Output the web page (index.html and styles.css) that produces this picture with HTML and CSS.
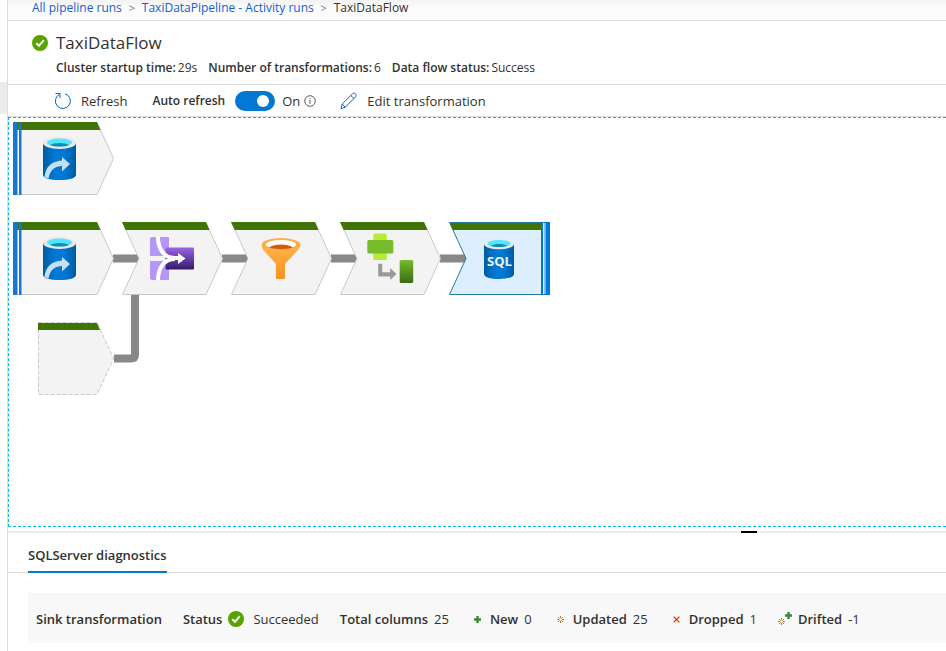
FILE: index.html
```html
<!DOCTYPE html>
<html lang="en">
<head>
<meta charset="utf-8">
<title>TaxiDataFlow</title>
<link rel="stylesheet" href="styles.css">
</head>
<body>
<svg class="defs" aria-hidden="true">
  <defs>
    <linearGradient id="blue"><stop offset="0" stop-color="#005ba1"/><stop offset=".35" stop-color="#0078d4"/><stop offset=".65" stop-color="#0078d4"/><stop offset="1" stop-color="#005ba1"/></linearGradient>
    <linearGradient id="purple" x2="0" y2="1"><stop offset="0" stop-color="#9a66e4"/><stop offset="1" stop-color="#341a6e"/></linearGradient>
    <linearGradient id="orange" x2="0" y2="1"><stop offset="0" stop-color="#ffb34d"/><stop offset="1" stop-color="#fa9218"/></linearGradient>
    <linearGradient id="green" x2="0" y2="1"><stop offset="0" stop-color="#76bc2d"/><stop offset="1" stop-color="#3b6a14"/></linearGradient>
    <symbol id="check" viewBox="0 0 16 16"><circle cx="8" cy="8" r="8" fill="#57a300"/><path d="M4.3 8.2 7 10.8 11.8 5.2" fill="none" stroke="#fff" stroke-width="2"/></symbol>
    <symbol id="plus" viewBox="0 0 7 7"><path d="M2.300 0h2.400v2.300H7v2.400H4.700V7H2.300V4.700H0V2.300h2.300z" fill="#388a34"/></symbol>
    <symbol id="star" viewBox="0 0 7 7"><path d="M3.500 0v2.200M3.500 4.800V7M0 3.500h2.200M4.800 3.500H7M1 1l1.600 1.600M4.400 4.400 6 6M6 1 4.400 2.600M2.600 4.400 1 6" stroke="#c27d1a" fill="none"/></symbol>
    <symbol id="source" viewBox="0 0 101 73">
      <path d="M.5.5h83.500l16.500 36-16.500 36H.5z" fill="#f3f3f3" stroke="#c8c8c8"/>
      <path d="M0 0h84l3.500 8H0z" fill="#407505"/>
      <path d="M5 8h1v64H5z" fill="#fff"/>
      <path d="M0 0h4.500v73H0zM6 0h2.500v73H6z" fill="#1579d2"/>
      <path d="M30 21v32c0 3 7 5 16.500 5S63 56 63 53V21z" fill="url(#blue)"/>
      <ellipse cx="46.500" cy="21" rx="16.500" ry="6" fill="#e8e8e8"/>
      <ellipse cx="46.500" cy="20.500" rx="12.500" ry="4" fill="#50e6ff"/>
      <path d="M37 23c4-2.700 15-2.700 19 0-4 2-15 2-19 0z" fill="#198ab3"/>
      <path d="M31.500 55c1-10 7-16 17.500-16.500V35l8 7-8 7.500V44c-7 0-12 4-13.500 12.700z" fill="#c3e0f7"/>
    </symbol>
    <symbol id="step" viewBox="0 0 101 73">
      <path d="M.5.5H84l16.500 36-16.500 36H.5l16.500-36z" fill="#f3f3f3" stroke="#c8c8c8"/>
      <path d="M0 0h84l3.500 8H3.700z" fill="#407505"/>
    </symbol>
  </defs>
</svg>
<div class="app">
  <div class="rail"><div class="rail-item"></div></div>
  <main class="main">
    <nav class="crumbs" aria-label="Breadcrumb">
      <a href="#">All pipeline runs</a><span class="sep">&gt;</span><a href="#">TaxiDataPipeline - Activity runs</a><span class="sep">&gt;</span><span>TaxiDataFlow</span>
    </nav>
    <header class="head">
      <svg class="status" viewBox="0 0 16 16"><use href="#check"/></svg>
      <div>
        <h1>TaxiDataFlow</h1>
        <div class="facts">
          <span><b>Cluster startup time:</b>29s</span>
          <span><b>Number of transformations:</b>6</span>
          <span><b>Data flow status:</b>Success</span>
        </div>
      </div>
    </header>
    <div class="toolbar">
      <button class="tool" type="button">
        <svg class="tool-icon" viewBox="0 0 18 18" fill="none" stroke="#0067c5"><path d="M11 1.800a7.500 7.500 0 1 1-5.500.5M1.500 1.500h4.500V6"/></svg>Refresh
      </button>
      <label class="auto" for="auto">Auto refresh</label>
      <input class="switch" id="auto" type="checkbox" role="switch" checked>
      <span class="on">On</span>
      <svg class="info" viewBox="0 0 12 12" fill="none" stroke="#605e5c"><circle cx="6" cy="6" r="5.300"/><path d="M6 5v4M6 3v1"/></svg>
      <button class="tool edit" type="button">
        <svg class="tool-icon" viewBox="0 0 18 18" fill="none" stroke="#0f62c0"><path d="M1 16.500 2.200 12 12.500 1.800c1-1 2.300-.8 3 0s.8 2 0 3L5.200 15.300zM10.800 3.500l3.200 3.200M2.200 12l3 3.200"/></svg>Edit transformation
      </button>
    </div>
    <section class="canvas" aria-label="Data flow">
      <svg class="links" viewBox="0 0 560 290" fill="none" stroke="#8a8886" stroke-width="8"><path d="M104 140.500h26M213 140.500h26M322 140.500h26M431 140.500h26"/><path d="M105 240.500h17q4 0 4-4V177"/></svg>
      <svg class="node col-1 row-1" viewBox="0 0 101 73"><use href="#source"/></svg>
      <svg class="node col-1 row-2" viewBox="0 0 101 73"><use href="#source"/></svg>
      <svg class="node col-2 row-2" viewBox="0 0 101 73">
        <use href="#step"/>
        <path d="M29.500 15H47v19H28V16.500zM28 39h19v19H29.500L28 56.500z" fill="#b796f9"/>
        <rect x="43.500" y="25.500" width="28.500" height="22" rx="1" fill="url(#purple)"/>
        <path d="M36 15c0 12 6 21 17 21h5M36 58c0-12 6-21 17-21" fill="none" stroke="#fff" stroke-width="4"/>
        <path d="M56 31l7.500 5.500L56 42z" fill="#fff"/>
      </svg>
      <svg class="node col-3 row-2" viewBox="0 0 101 73">
        <use href="#step"/>
        <path d="M30.700 23c0 3 1.300 4.800 3 6.500L45 42v13.500q0 1.500 1.500 1.500h6q1.500 0 1.500-1.500V42l11.500-12.500c2-2 3.500-4 3.500-6.500z" fill="url(#orange)"/>
        <ellipse cx="50" cy="22.500" rx="19.300" ry="6.500" fill="#ffae45"/>
        <ellipse cx="50" cy="22.500" rx="15" ry="4.500" fill="#fff"/>
        <path d="M38 25.500c5-4 19-4 24 0-5 2.200-19 2.200-24 0z" fill="#d45b08"/>
      </svg>
      <svg class="node col-4 row-2" viewBox="0 0 101 73">
        <use href="#step"/>
        <rect x="33.300" y="11.500" width="13.500" height="26.500" rx="1.500" fill="#b4ec36"/>
        <rect x="27.300" y="18" width="26" height="13.500" rx="1.500" fill="#76bc2d"/>
        <path d="M38.200 41.700h4v8.500h8V46l6.300 6-6.300 6v-3.600h-12z" fill="#999"/>
        <rect x="59.700" y="38" width="13.500" height="23" rx="1.500" fill="url(#green)"/>
      </svg>
      <svg class="node col-5 row-2" viewBox="0 0 101 73">
        <path d="M.5.500h100v72H.5l16.500-36z" fill="#ddeffe" stroke="#237b9f"/>
        <path d="M1 1h92v7H4z" fill="#407505"/>
        <path d="M92 0h2v73h-2zM96.500 0h4.500v73h-4.500z" fill="#0078d4"/>
        <path d="M95 1h1v71h-1z" fill="#0078d4" opacity=".4"/>
        <path d="M35 22v30c0 3 6 5 15 5s15-2 15-5V22z" fill="url(#blue)"/>
        <ellipse cx="50" cy="22" rx="15" ry="5.300" fill="#e8e8e8"/>
        <ellipse cx="50" cy="21.500" rx="11.500" ry="3.600" fill="#50e6ff"/>
        <path d="M41.500 23.700c4-2.400 13-2.400 17 0-4 1.800-13 1.800-17 0z" fill="#198ab3"/>
        <text class="sql" x="50.500" y="44" text-anchor="middle">SQL</text>
      </svg>
      <svg class="node ref row-3" viewBox="0 0 76 73">
        <path d="M.5.500H59l16.500 36-16.500 36H.5z" fill="#f3f3f3" stroke="#c8c8c8" stroke-dasharray="4 2"/>
        <path d="M0 1h59l3 7H0z" fill="#407505"/>
      </svg>
    </section>
    <div class="splitter"><span class="grip"></span></div>
    <div class="tabs" role="tablist"><button class="tab" type="button" role="tab" aria-selected="true">SQLServer diagnostics</button></div>
    <section class="summary">
      <b>Sink transformation</b>
      <span class="pair state"><b>Status</b><svg class="status" viewBox="0 0 16 16"><use href="#check"/></svg>Succeeded</span>
      <span class="pair"><b>Total columns</b>25</span>
      <span class="pair mark"><svg class="glyph" viewBox="0 0 7 7"><use href="#plus"/></svg><b>New</b>0</span>
      <span class="pair mark"><svg class="glyph" viewBox="0 0 7 7"><use href="#star"/></svg><b>Updated</b>25</span>
      <span class="pair mark"><svg class="glyph" viewBox="0 0 7 7" fill="none" stroke="#d83b01" stroke-width="1.300"><path d="M.6.600l5.800 5.800M6.400.600.600 6.400"/></svg><b>Dropped</b>1</span>
      <span class="pair drift"><svg class="double" viewBox="0 0 14 14"><use href="#plus" x="7" width="7" height="7"/><use href="#star" y="6" width="7" height="7"/></svg><b>Drifted</b>-1</span>
    </section>
  </main>
</div>
</body>
</html>
```
FILE: styles.css
```css
* { box-sizing: border-box; }
body { margin: 0; background: #fff; color: #323130; font: 13px/18px "Segoe UI", "Open Sans", "Noto Sans", sans-serif; }
b { font-weight: 600; }
svg { display: block; flex: none; }
button { font: inherit; color: inherit; background: none; border: 0; padding: 0; }
.defs { position: absolute; width: 0; height: 0; }
.app { display: flex; height: 100vh; overflow: hidden; white-space: nowrap; }
.rail { flex: none; width: 8px; border-right: 1px solid #dcdcdc; padding-top: 82px; }
.rail-item { height: 32px; background: #edebe9; }
.main { flex: 1; min-width: 0; display: flex; flex-direction: column; }

.crumbs { display: flex; align-items: flex-start; height: 21px; padding: 0 24px; font-size: 12px; line-height: 16px; background: linear-gradient(#f3f3f3, #fcfcfc 8px); border-bottom: 1px solid #dcdcdc; }
.crumbs a { color: #1160d0; text-decoration: none; }
.sep { width: 20px; text-align: center; color: #797775; font-size: 11px; }

.head { display: flex; gap: 8px; height: 64px; padding: 10px 24px 0; border-bottom: 1px solid #dcdcdc; }
.status { width: 16px; height: 16px; }
.head .status { margin-top: 4px; }
h1 { margin: 0; font-size: 17px; line-height: 24px; font-weight: 500; }
.facts { display: flex; gap: 11px; margin-top: 4px; font-size: 12px; }
.facts b { margin-right: 2px; }

.toolbar { display: flex; align-items: center; height: 32px; padding-left: 46px; border-bottom: 1px solid #dcdcdc; }
.tool { display: flex; align-items: center; gap: 9px; }
.tool-icon { width: 18px; height: 18px; }
.auto { margin-left: 25px; font-weight: 600; font-size: 12px; }
.switch { appearance: none; flex: none; width: 40px; height: 20px; margin: 0 7px 0 10px; border-radius: 10px; background: #0078d4; padding: 4px 6px; }
.switch::before { content: ""; display: block; width: 12px; height: 12px; border-radius: 50%; background: #fff; }
.switch:checked::before { margin-left: auto; }
.info { width: 12px; height: 12px; margin-left: 4px; }
.edit { margin-left: 24px; }

.canvas { position: relative; flex: 1; min-height: 0; border: 1px dashed #00b7f0; border-right: 0; }
.links { position: absolute; left: 0; top: 0; width: 560px; height: 290px; }
.node { position: absolute; width: 101px; height: 73px; }
.col-1 { left: 4px; }
.col-2 { left: 113px; }
.col-3 { left: 222px; }
.col-4 { left: 331px; }
.col-5 { left: 440px; }
.ref { left: 29px; width: 76px; }
.row-1 { top: 4px; }
.row-2 { top: 104px; }
.row-3 { top: 204px; }
.sql { font: 700 13px "Open Sans", sans-serif; fill: #f2f2f2; }

.splitter { display: flex; margin-top: 4px; height: 2px; padding-right: 189px; justify-content: flex-end; background: #ededed; }
.grip { width: 16px; background: #000; }
.tabs { display: flex; height: 40px; padding-left: 20px; border-bottom: 1px solid #dcdcdc; }
.tab { height: 40px; padding: 6px 0 0; border-bottom: 2px solid #0078d4; font-weight: 600; }
.summary { display: flex; align-items: center; gap: 21px; height: 50px; margin: 20px 0 8px 20px; padding: 2px 0 0 8px; background: #f8f8f8; }
.pair { display: flex; align-items: center; gap: 6px; }
.mark { padding-left: 4px; }
.glyph { width: 7px; height: 7px; margin-right: 3px; }
.double { width: 14px; height: 14px; }
.state .status { margin-right: 3px; }
```
